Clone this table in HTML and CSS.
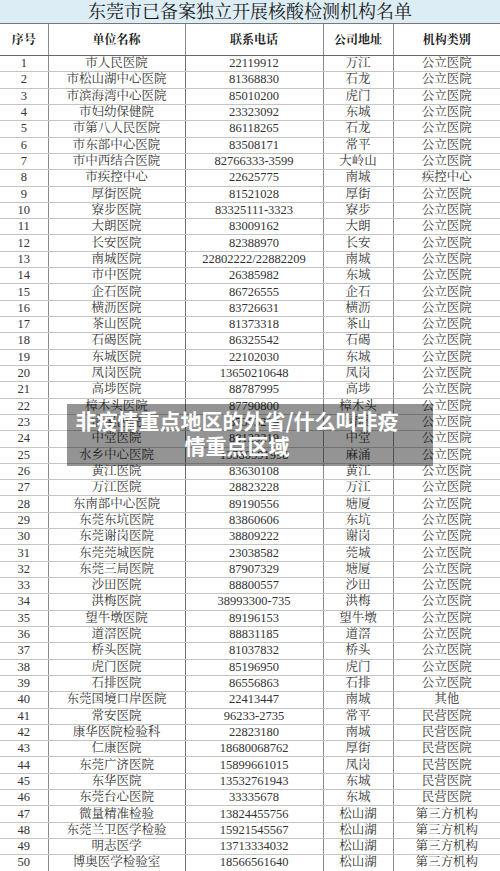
FILE: index.html
```html
<!DOCTYPE html>
<html lang="zh-CN">
<head>
<meta charset="utf-8">
<title>东莞市已备案独立开展核酸检测机构名单</title>
<link rel="stylesheet" href="styles.css">
</head>
<body>
<div class="page">
<table class="list">
<colgroup>
<col class="c-no"><col class="c-name"><col class="c-tel"><col class="c-addr"><col class="c-type">
</colgroup>
<thead>
<tr class="title-row"><th colspan="5">东莞市已备案独立开展核酸检测机构名单</th></tr>
<tr class="head-row"><th>序号</th><th>单位名称</th><th>联系电话</th><th>公司地址</th><th>机构类别</th></tr>
</thead>
<tbody>
<tr><td>1</td><td>市人民医院</td><td>22119912</td><td>万江</td><td>公立医院</td></tr>
<tr><td>2</td><td>市松山湖中心医院</td><td>81368830</td><td>石龙</td><td>公立医院</td></tr>
<tr><td>3</td><td>市滨海湾中心医院</td><td>85010200</td><td>虎门</td><td>公立医院</td></tr>
<tr><td>4</td><td>市妇幼保健院</td><td>23323092</td><td>东城</td><td>公立医院</td></tr>
<tr><td>5</td><td>市第八人民医院</td><td>86118265</td><td>石龙</td><td>公立医院</td></tr>
<tr><td>6</td><td>市东部中心医院</td><td>83508171</td><td>常平</td><td>公立医院</td></tr>
<tr><td>7</td><td>市中西结合医院</td><td>82766333-3599</td><td>大岭山</td><td>公立医院</td></tr>
<tr><td>8</td><td>市疾控中心</td><td>22625775</td><td>南城</td><td>疾控中心</td></tr>
<tr><td>9</td><td>厚街医院</td><td>81521028</td><td>厚街</td><td>公立医院</td></tr>
<tr><td>10</td><td>寮步医院</td><td>83325111-3323</td><td>寮步</td><td>公立医院</td></tr>
<tr><td>11</td><td>大朗医院</td><td>83009162</td><td>大朗</td><td>公立医院</td></tr>
<tr><td>12</td><td>长安医院</td><td>82388970</td><td>长安</td><td>公立医院</td></tr>
<tr><td>13</td><td>南城医院</td><td>22802222/22882209</td><td>南城</td><td>公立医院</td></tr>
<tr><td>14</td><td>市中医院</td><td>26385982</td><td>东城</td><td>公立医院</td></tr>
<tr><td>15</td><td>企石医院</td><td>86726555</td><td>企石</td><td>公立医院</td></tr>
<tr><td>16</td><td>横沥医院</td><td>83726631</td><td>横沥</td><td>公立医院</td></tr>
<tr><td>17</td><td>茶山医院</td><td>81373318</td><td>茶山</td><td>公立医院</td></tr>
<tr><td>18</td><td>石碣医院</td><td>86325542</td><td>石碣</td><td>公立医院</td></tr>
<tr><td>19</td><td>东城医院</td><td>22102030</td><td>东城</td><td>公立医院</td></tr>
<tr><td>20</td><td>凤岗医院</td><td>13650210648</td><td>凤岗</td><td>公立医院</td></tr>
<tr><td>21</td><td>高埗医院</td><td>88787995</td><td>高埗</td><td>公立医院</td></tr>
<tr><td>22</td><td>樟木头医院</td><td>87790800</td><td>樟木头</td><td>公立医院</td></tr>
<tr><td>23</td><td>清溪医院</td><td>87303219</td><td>清溪</td><td>公立医院</td></tr>
<tr><td>24</td><td>中堂医院</td><td>88123219</td><td>中堂</td><td>公立医院</td></tr>
<tr><td>25</td><td>水乡中心医院</td><td>13580591998</td><td>麻涌</td><td>公立医院</td></tr>
<tr><td>26</td><td>黄江医院</td><td>83630108</td><td>黄江</td><td>公立医院</td></tr>
<tr><td>27</td><td>万江医院</td><td>28823228</td><td>万江</td><td>公立医院</td></tr>
<tr><td>28</td><td>东南部中心医院</td><td>89190556</td><td>塘厦</td><td>公立医院</td></tr>
<tr><td>29</td><td>东莞东坑医院</td><td>83860606</td><td>东坑</td><td>公立医院</td></tr>
<tr><td>30</td><td>东莞谢岗医院</td><td>38809222</td><td>谢岗</td><td>公立医院</td></tr>
<tr><td>31</td><td>东莞莞城医院</td><td>23038582</td><td>莞城</td><td>公立医院</td></tr>
<tr><td>32</td><td>东莞三局医院</td><td>87907329</td><td>塘厦</td><td>公立医院</td></tr>
<tr><td>33</td><td>沙田医院</td><td>88800557</td><td>沙田</td><td>公立医院</td></tr>
<tr><td>34</td><td>洪梅医院</td><td>38993300-735</td><td>洪梅</td><td>公立医院</td></tr>
<tr><td>35</td><td>望牛墩医院</td><td>89196153</td><td>望牛墩</td><td>公立医院</td></tr>
<tr><td>36</td><td>道滘医院</td><td>88831185</td><td>道滘</td><td>公立医院</td></tr>
<tr><td>37</td><td>桥头医院</td><td>81037832</td><td>桥头</td><td>公立医院</td></tr>
<tr><td>38</td><td>虎门医院</td><td>85196950</td><td>虎门</td><td>公立医院</td></tr>
<tr><td>39</td><td>石排医院</td><td>86556863</td><td>石排</td><td>公立医院</td></tr>
<tr><td>40</td><td>东莞国境口岸医院</td><td>22413447</td><td>南城</td><td>其他</td></tr>
<tr><td>41</td><td>常安医院</td><td>96233-2735</td><td>常平</td><td>民营医院</td></tr>
<tr><td>42</td><td>康华医院检验科</td><td>22823180</td><td>南城</td><td>民营医院</td></tr>
<tr><td>43</td><td>仁康医院</td><td>18680068762</td><td>厚街</td><td>民营医院</td></tr>
<tr><td>44</td><td>东莞广济医院</td><td>15899661015</td><td>凤岗</td><td>民营医院</td></tr>
<tr><td>45</td><td>东华医院</td><td>13532761943</td><td>东城</td><td>民营医院</td></tr>
<tr><td>46</td><td>东莞台心医院</td><td>33335678</td><td>东城</td><td>民营医院</td></tr>
<tr><td>47</td><td>微量精准检验</td><td>13824455756</td><td>松山湖</td><td>第三方机构</td></tr>
<tr><td>48</td><td>东莞兰卫医学检验</td><td>15921545567</td><td>松山湖</td><td>第三方机构</td></tr>
<tr><td>49</td><td>明志医学</td><td>13713334032</td><td>松山湖</td><td>第三方机构</td></tr>
<tr><td>50</td><td>博奥医学检验室</td><td>18566561640</td><td>松山湖</td><td>第三方机构</td></tr>
</tbody>
</table>
<div class="caption">非疫情重点地区的外省/什么叫非疫情重点区域</div>
</div>
</body>
</html>
```
FILE: styles.css
```css
html, body {
  margin: 0;
  padding: 0;
  background: #ffffff;
}
.page {
  position: relative;
  width: 500px;
  height: 871px;
  overflow: hidden;
}
.list {
  width: 500px;
  table-layout: fixed;
  border-collapse: collapse;
  font-family: "Liberation Serif", "Noto Serif CJK SC", "Noto Sans CJK SC", serif;
  color: #333333;
}
.c-no { width: 48px; }
.c-name { width: 137px; }
.c-tel { width: 138px; }
.c-addr { width: 70px; }
.c-type { width: 107px; }

.title-row th {
  height: 22px;
  padding: 1px 0 0;
  background: #dcedf5;
  font-size: 18px;
  font-weight: normal;
  color: #1a1a1a;
  text-align: center;
  line-height: 16px;
  border-bottom: 1px solid #777;
}
.head-row th {
  height: 31px;
  padding: 0;
  font-size: 12px;
  font-weight: bold;
  color: #222;
  text-align: center;
  line-height: 12px;
  border-bottom: 1px solid #666;
  border-left: 1px solid #8a8a8a;
}
.head-row th:first-child { border-left: none; }
.list tbody tr {
  height: 16.32px;
}
.list td {
  height: 15.32px;
  padding: 0;
  font-size: 12.5px;
  line-height: 11px;
  text-align: center;
  white-space: nowrap;
  overflow: hidden;
  border-bottom: 1px solid #c4c4c4;
  border-left: 1px solid #8a8a8a;
}
.list td:first-child { border-left: none; }
.list td:nth-child(3) { border-left: 1px solid #6f6f6f; }

.caption {
  position: absolute;
  left: 67px;
  top: 404px;
  width: 328px;
  height: 58px;
  padding: 4px 32px 0 6px;
  background: rgba(0, 0, 0, 0.42);
  color: #ffffff;
  font-family: "Noto Sans CJK SC", sans-serif;
  font-weight: 700;
  font-size: 21px;
  line-height: 25px;
  text-align: center;
}
```
